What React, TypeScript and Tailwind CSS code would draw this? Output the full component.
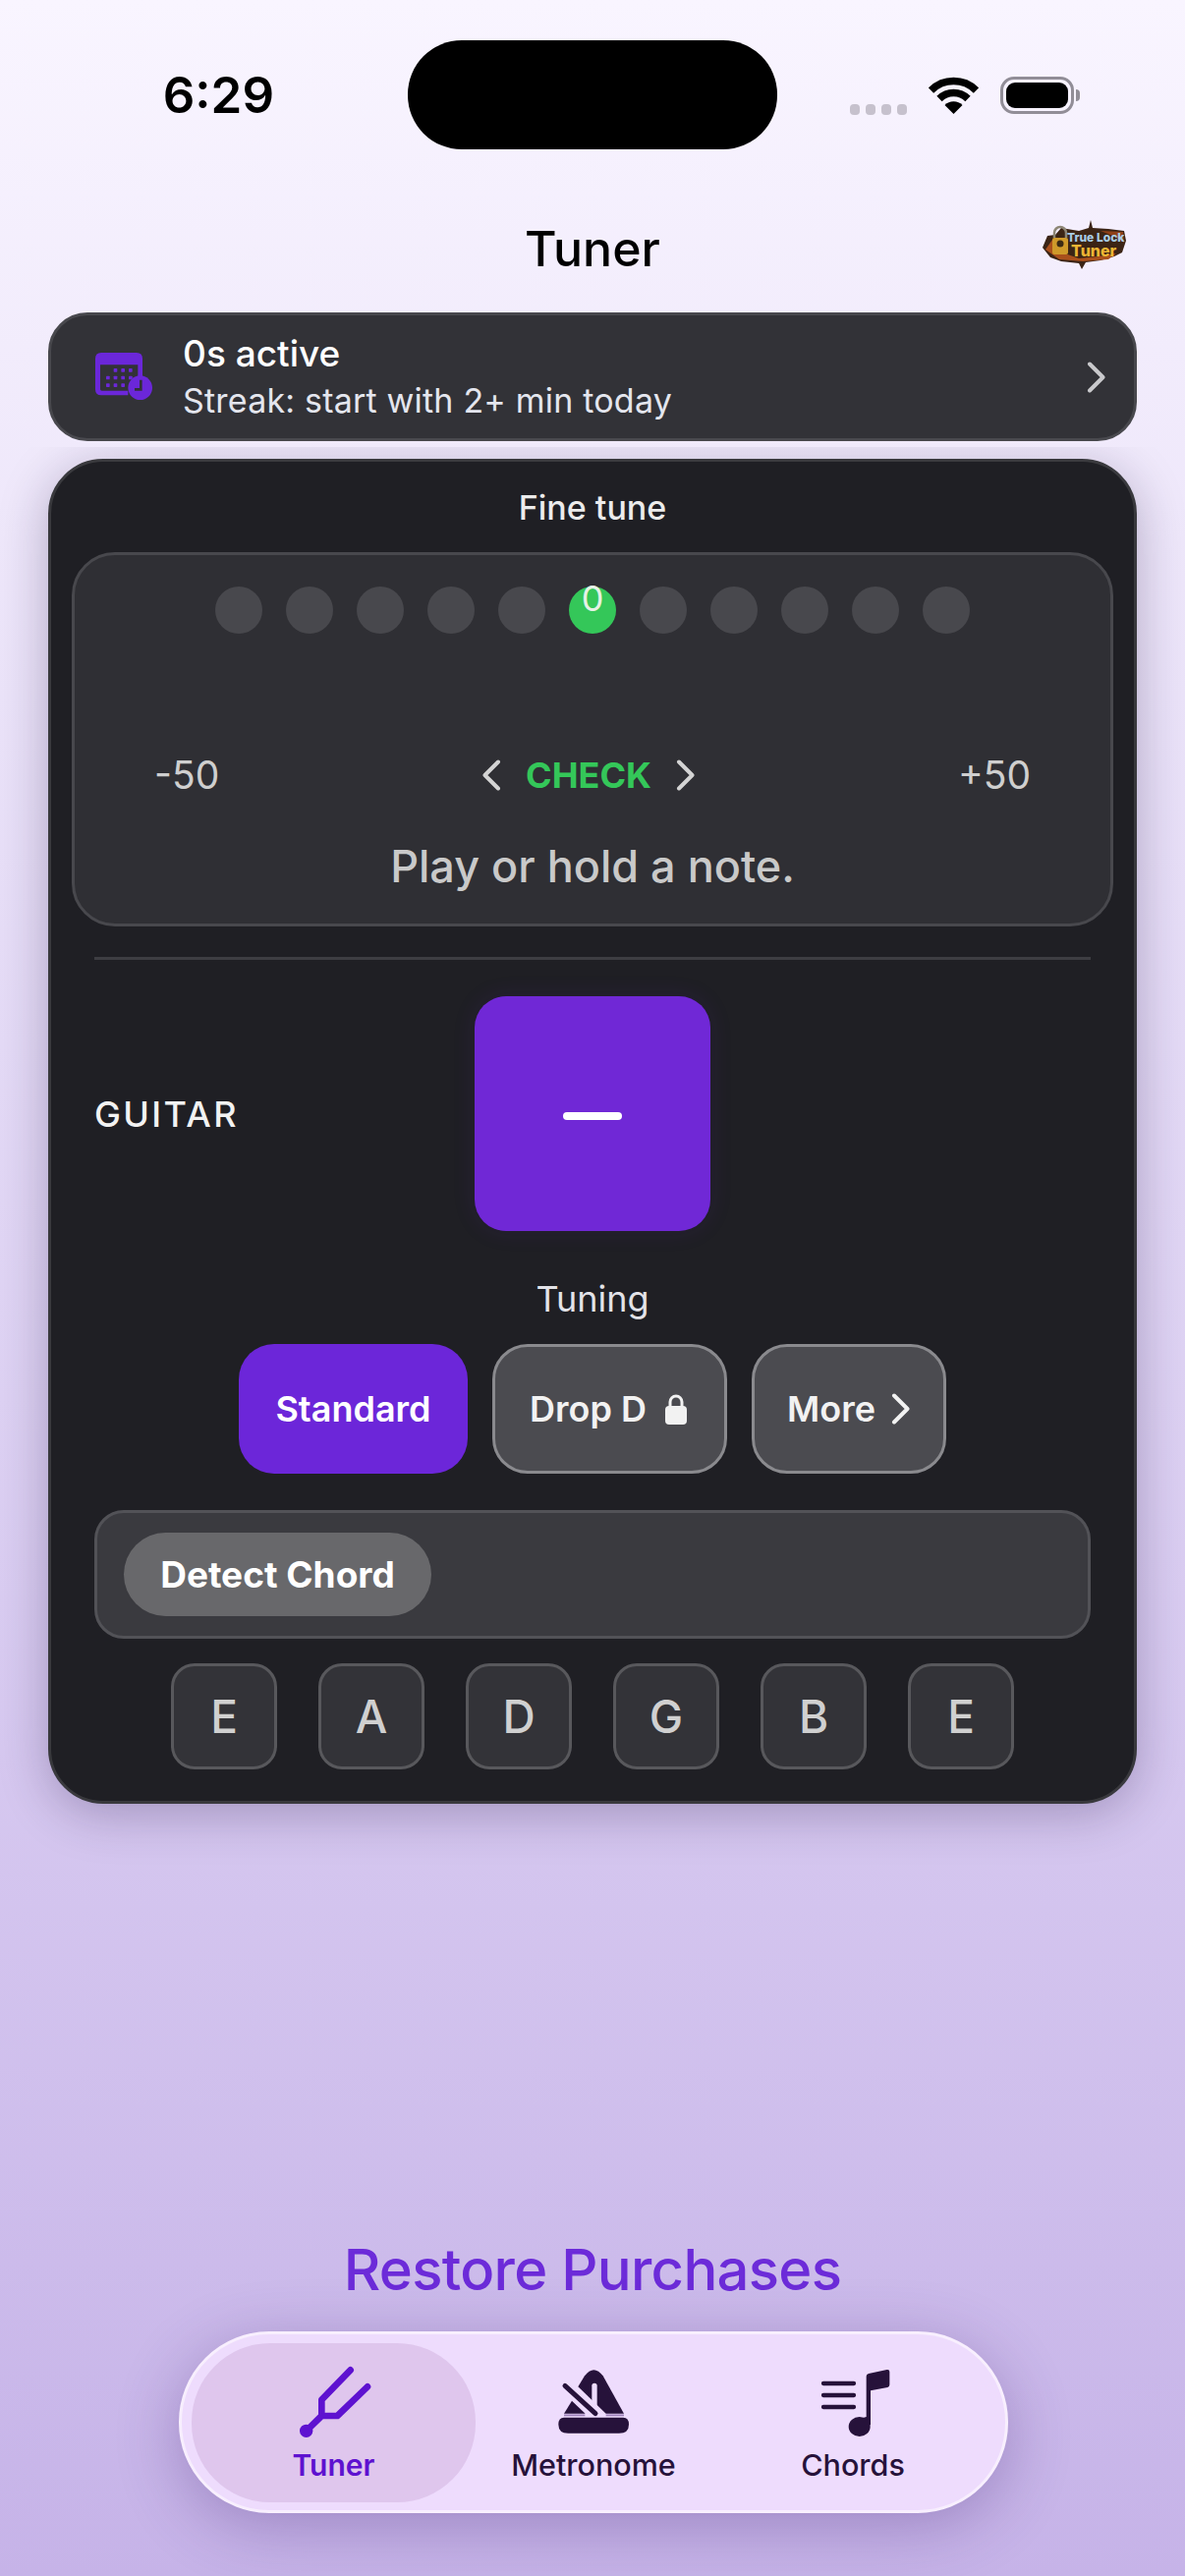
const dots = [-5, -4, -3, -2, -1, 0, 1, 2, 3, 4, 5];
const strings = ['E', 'A', 'D', 'G', 'B', 'E'];

function Chevron({ dir, className }: { dir: 'left' | 'right'; className?: string }) {
  return (
    <svg viewBox="0 0 20 32" fill="none" className={className}>
      <path
        d={dir === 'left' ? 'M17 2.5 L3.5 16 L17 29.5' : 'M3 2.5 L16.5 16 L3 29.5'}
        stroke="currentColor"
        strokeWidth="4"
        strokeLinecap="round"
        strokeLinejoin="round"
      />
    </svg>
  );
}

function Wifi() {
  return (
    <svg width="51" height="38" viewBox="0 0 51 38" fill="none">
      <path d="M2.5 14 A32.5 32.5 0 0 1 48.5 14" stroke="#000" strokeWidth="7.5" />
      <path d="M11 22.5 A20.5 20.5 0 0 1 40 22.5" stroke="#000" strokeWidth="7.5" />
      <path d="M25.5 38 L16.5 29 A12.7 12.7 0 0 1 34.5 29 Z" fill="#000" />
    </svg>
  );
}

function Battery() {
  return (
    <div className="flex items-center">
      <div className="w-[75px] h-[38px] rounded-[14px] border-[3px] border-[#918d97] p-[3px]">
        <div className="w-full h-full rounded-[9px] bg-black" />
      </div>
      <div className="w-[4px] h-[12px] ml-[2px] rounded-r-full bg-[#918d97]" />
    </div>
  );
}

function CalendarIcon() {
  return (
    <svg width="60" height="50" viewBox="0 0 180 150" fill="none">
      <path
        d="M18 0 H126 Q144 0 144 18 V90 H130 V37 H15 V112 Q15 116 20 116 H100 V130 H18 Q0 130 0 112 V18 Q0 0 18 0 Z"
        fill="#6b27d9"
      />
      {[
        [56, 48],
        [79, 48],
        [102, 48],
        [33, 71],
        [56, 71],
        [79, 71],
        [102, 71],
        [33, 94],
        [56, 94],
        [79, 94],
      ].map(([x, y]) => (
        <rect key={`${x}-${y}`} x={x} y={y} width="11" height="11" rx="2" fill="#6b27d9" />
      ))}
      <circle cx="137" cy="107" r="37" fill="#6b27d9" />
      <path d="M139 83 V112 H120" stroke="#323237" strokeWidth="8" />
    </svg>
  );
}

function Logo() {
  return (
    <svg width="90" height="52" viewBox="0 0 90 52">
      <path
        d="M3 29 L8 17 L16 16 L22 9 L40 12 L50 9 L52 1 L54 9 L70 10 L86 12 L88 22 L84 34 L76 38 L62 42 L47 44 L43 51 L40 45 L22 43 L11 39 Z"
        fill="#3b2415"
      />
      <path d="M6 31 L13 21 L20 33 L40 40 L60 38 L78 35 L70 41 L44 43 L20 41 Z" fill="#a9501c" />
      <path d="M62 12 L85 13 L86 24 L77 18 Z" fill="#8f4119" />
      <rect x="13" y="19" width="16" height="17" rx="2" fill="#cf9a2a" />
      <circle cx="21" cy="25" r="3.5" fill="#3a2a14" />
      <path d="M15 19 V14 A6 6 0 0 1 27 14 V19" fill="none" stroke="#8d8675" strokeWidth="2.5" />
      <text x="28" y="23" fontFamily="Inter, sans-serif" fontSize="12" fontWeight="800" fill="#a9cde6">
        True Lock
      </text>
      <text x="32" y="38" fontFamily="Inter, sans-serif" fontSize="16" fontWeight="800" fill="#edb534">
        Tuner
      </text>
    </svg>
  );
}

function TunerIcon() {
  return (
    <svg width="120" height="100" viewBox="0 0 360 300" fill="none">
      <path
        d="M95 253 L142 207 V158 L230 67 M142 207 H190 L282 118"
        stroke="#5e12d0"
        strokeWidth="20"
        strokeLinecap="round"
        strokeLinejoin="round"
      />
      <circle cx="95" cy="253" r="20" fill="#5e12d0" />
    </svg>
  );
}

function MetronomeIcon() {
  return (
    <svg width="120" height="100" viewBox="-18 -30 360 300" fill="none">
      <path d="M135 55 Q163 18 191 55 L255 170 H200 L115 88 Z" fill="#26123a" />
      <path d="M165 85 V148" stroke="#eedcfd" strokeWidth="16" strokeLinecap="round" />
      <path d="M75 85 L168 170" stroke="#26123a" strokeWidth="15" strokeLinecap="round" />
      <path d="M96 131 L137 170 H72 Z" fill="#26123a" />
      <path d="M72 175 H136 M200 175 H255" stroke="#9b7fb8" strokeWidth="5" />
      <path
        d="M55 203 Q55 182 72 182 H253 Q270 182 270 203 Q270 230 240 230 H85 Q55 230 55 203 Z"
        fill="#26123a"
      />
    </svg>
  );
}

function ChordsIcon() {
  return (
    <svg width="120" height="100" viewBox="-36 -30 360 300" fill="none">
      <path d="M54 78 H147 M54 114 H147 M54 150 H147" stroke="#26123a" strokeWidth="13" strokeLinecap="round" />
      <path d="M185 56 Q185 50 192 48 L248 36 Q256 35 256 42 V82 Q256 88 250 90 L198 100 V205 H168 V185 L185 180 Z" fill="#26123a" />
      <ellipse cx="164" cy="210" rx="33" ry="30" fill="#26123a" />
    </svg>
  );
}

export default function App() {
  return (
    <div className="w-[1206px] h-[2622px] flex flex-col overflow-hidden bg-gradient-to-b from-[#f9f5ff] to-[#c6b3e8] [font-family:Inter,sans-serif] text-black">
      {/* status bar */}
      <div className="grid grid-cols-[1fr_376px_1fr] pt-[41px] h-[152px]">
        <div className="flex items-center justify-end pr-[136px] text-[51px] font-semibold leading-none">6:29</div>
        <div className="rounded-[55px] bg-black" />
        <div className="flex items-center pl-[74px]">
          <div className="flex gap-[6px] mt-[30px] mr-[22px]">
            <div className="w-[10px] h-[11px] rounded-[4px] bg-[#c6c1cd]" />
            <div className="w-[10px] h-[11px] rounded-[4px] bg-[#c6c1cd]" />
            <div className="w-[10px] h-[11px] rounded-[4px] bg-[#c6c1cd]" />
            <div className="w-[10px] h-[11px] rounded-[4px] bg-[#c6c1cd]" />
          </div>
          <Wifi />
          <div className="ml-[22px]">
            <Battery />
          </div>
        </div>
      </div>

      {/* header */}
      <div className="grid grid-cols-[1fr_auto_1fr] items-center h-[166px] pt-[36px]">
        <div />
        <div className="text-[50px] font-medium leading-none">Tuner</div>
        <div className="justify-self-end mr-[58px] mb-[8px]">
          <Logo />
        </div>
      </div>

      {/* activity banner */}
      <div className="mx-[49px] h-[131px] flex items-center rounded-[40px] border-[3px] border-[#48484d] bg-[#323237] pl-[45px] pr-[28px]">
        <CalendarIcon />
        <div className="ml-[29px] flex-1 flex flex-col gap-[5px]">
          <div className="text-[37px] font-medium leading-[44px] text-white">0s active</div>
          <div className="text-[34px] tracking-[0.2px] leading-[42px] text-[#e4e6ee]">Streak: start with 2+ min today</div>
        </div>
        <Chevron dir="right" className="w-[20px] h-[32px] text-[#c9c9cc]" />
      </div>

      {/* clipped scroll area */}
      <div className="flex-1 mt-[6px] pt-[12px] overflow-hidden flex flex-col">
        <div className="mx-[49px] h-[1369px] shrink-0 rounded-[56px] border-[3px] border-[#39393d] bg-[#1f1f24] shadow-[0_10px_50px_rgba(30,15,60,0.28)] px-[21px] flex flex-col">
          <div className="h-[92px] shrink-0 flex items-center justify-center text-[34px] font-medium text-[#ececec]">
            Fine tune
          </div>

          {/* meter */}
          <div className="h-[381px] shrink-0 rounded-[44px] border-[3px] border-[#48484d] bg-[#2f2f34] pt-[32px] flex flex-col">
            <div className="flex justify-center gap-[24px]">
              {dots.map((d) =>
                d === 0 ? (
                  <div key={d} className="w-[48px] h-[48px] rounded-full bg-[#34c759] flex justify-center text-[36px] leading-[24px] text-[#e6f2e6]">
                    0
                  </div>
                ) : (
                  <div key={d} className="w-[48px] h-[48px] rounded-full bg-[#48484d]" />
                ),
              )}
            </div>
            <div className="mt-[115px] h-[46px] grid grid-cols-[1fr_auto_1fr] items-center px-[81px] text-[39px] text-[#cfcfcf]">
              <div>-50</div>
              <div className="flex items-center gap-[25px] mr-[8px]">
                <Chevron dir="left" className="w-[20px] h-[32px] text-[#d4d4d4]" />
                <span className="text-[36px] font-bold text-[#34c759]">CHECK</span>
                <Chevron dir="right" className="w-[20px] h-[32px] text-[#d4d4d4]" />
              </div>
              <div className="text-right">+50</div>
            </div>
            <div className="mt-[49px] h-[54px] flex items-center justify-center text-[45px] font-medium text-[#c9c9c9]">
              Play or hold a note.
            </div>
          </div>

          <div className="mt-[31px] mx-[23px] h-[3px] shrink-0 bg-[#3d3d42]" />

          {/* instrument */}
          <div className="mt-[37px] mx-[23px] h-[239px] shrink-0 grid grid-cols-[1fr_240px_1fr] items-center">
            <div className="text-[36px] font-medium tracking-[2.4px] text-[#f2f2f2]">GUITAR</div>
            <div className="h-full rounded-[32px] bg-[#7028d6] flex items-center justify-center shadow-[0_0_24px_rgba(112,40,214,0.1)]">
              <div className="w-[60px] h-[8px] mt-[4px] rounded-full bg-white" />
            </div>
            <div />
          </div>

          <div className="mt-[47px] h-[44px] shrink-0 flex items-center justify-center text-[36px] text-[#e3e3e8]">
            Tuning
          </div>

          <div className="mt-[24px] h-[132px] shrink-0 flex justify-center gap-[25px] text-[36px] font-semibold text-[#f2f2f2]">
            <div className="w-[233px] rounded-[36px] bg-[#6c26d9] flex items-center justify-center text-white">Standard</div>
            <div className="w-[239px] rounded-[36px] border-[3px] border-[#8a8a8e] bg-[#4b4b50] flex items-center justify-center gap-[19px] pr-[3px]">
              Drop D
              <svg width="22" height="32" viewBox="0 0 22 32" fill="none">
                <path d="M5 14 V9 A6 6 0 0 1 17 9 V14" stroke="#f2f2f2" strokeWidth="3" />
                <rect x="0" y="13" width="22" height="19" rx="4" fill="#f2f2f2" />
              </svg>
            </div>
            <div className="w-[198px] rounded-[36px] border-[3px] border-[#8a8a8e] bg-[#4b4b50] flex items-center justify-center gap-[16px]">
              More
              <Chevron dir="right" className="w-[20px] h-[32px]" />
            </div>
          </div>

          <div className="mt-[37px] mx-[23px] h-[131px] shrink-0 rounded-[30px] border-[3px] border-[#525257] bg-[#3a3a3f] flex items-center pl-[27px]">
            <div className="w-[313px] h-[85px] rounded-full bg-[#68686b] flex items-center justify-center text-[37px] font-bold text-white">
              Detect Chord
            </div>
          </div>

          <div className="mt-[25px] flex justify-center gap-[42px]">
            {strings.map((s, i) => (
              <div
                key={i}
                className="w-[108px] h-[108px] rounded-[24px] border-[3px] border-[#58585c] bg-[#333338] flex items-center justify-center text-[46px] font-medium text-[#d0d0d0]"
              >
                {s}
              </div>
            ))}
          </div>
        </div>

        <div className="mt-auto h-[70px] flex items-center justify-center text-[58px] font-medium text-[#6c2bd9] tracking-[-0.7px]">
          Restore Purchases
        </div>

        {/* tab bar */}
        <div className="mt-[28px] mb-[64px] ml-[182px] mr-[180px] h-[185px] shrink-0 rounded-[92px] border-[3px] border-[#f8effe] bg-[#eedcfd] shadow-[0_14px_64px_rgba(60,30,110,0.3)] pl-[10px] pr-[11px] pt-[9px] pb-[8px] grid grid-cols-[289px_240px_1fr]">
          <div className="rounded-[80px] bg-[#dfc6ed] flex flex-col items-center pt-[5px]">
            <TunerIcon />
            <div className="h-[38px] flex items-center text-[30px] font-semibold text-[#5e12d0]">Tuner</div>
          </div>
          <div className="flex flex-col items-center pt-[5px]">
            <MetronomeIcon />
            <div className="h-[38px] flex items-center text-[30.5px] font-medium text-[#26123a]">Metronome</div>
          </div>
          <div className="flex flex-col items-center pt-[5px]">
            <ChordsIcon />
            <div className="h-[38px] flex items-center text-[30.5px] font-medium text-[#26123a]">Chords</div>
          </div>
        </div>
      </div>
    </div>
  );
}
